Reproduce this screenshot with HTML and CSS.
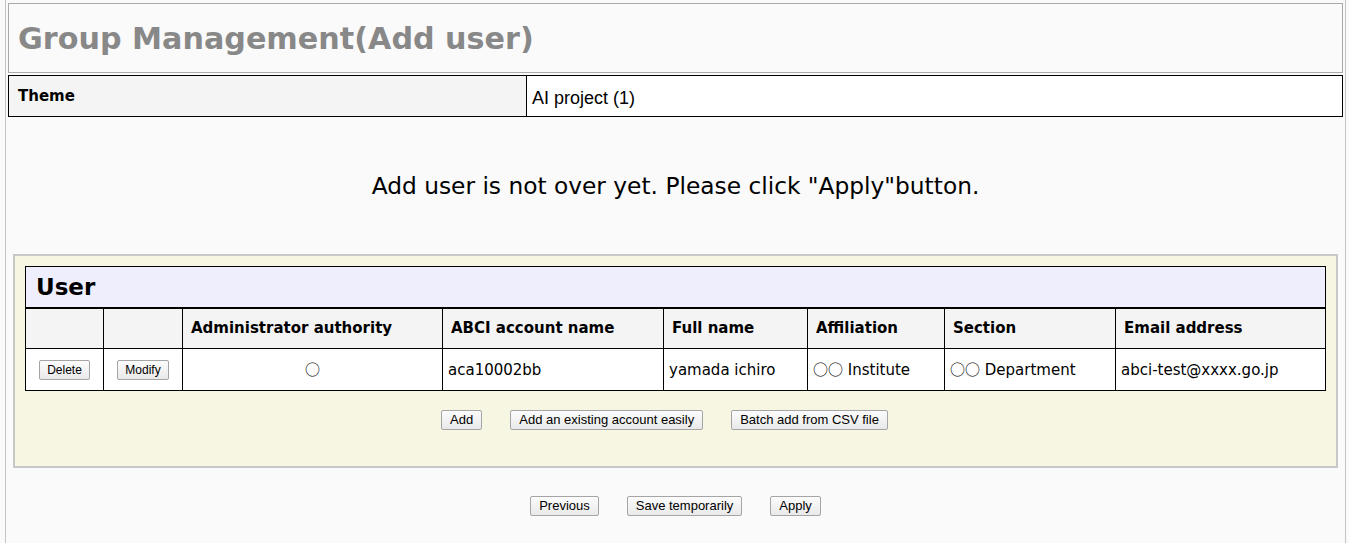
FILE: index.html
```html
<!DOCTYPE html>
<html>
<head>
<meta charset="utf-8">
<link rel="stylesheet" href="styles.css">
</head>
<body>
<div class="page">
  <div class="title-box"><h1 class="title">Group Management(Add user)</h1></div>
  <table class="theme">
    <tr><th class="theme-label">Theme</th><td class="theme-value">AI project (1)</td></tr>
  </table>
  <p class="message">Add user is not over yet. Please click "Apply"button.</p>
  <div class="panel">
    <table class="users">
      <tr><th class="caption" colspan="8">User</th></tr>
      <tr class="head">
        <th class="c1"></th><th class="c2"></th>
        <th class="c3">Administrator authority</th>
        <th class="c4">ABCI account name</th>
        <th class="c5">Full name</th>
        <th class="c6">Affiliation</th>
        <th class="c7">Section</th>
        <th class="c8">Email address</th>
      </tr>
      <tr class="row">
        <td class="btn-cell"><button class="btn">Delete</button></td>
        <td class="btn-cell"><button class="btn">Modify</button></td>
        <td class="center"><span class="mark">○</span></td>
        <td>aca10002bb</td>
        <td>yamada ichiro</td>
        <td><span class="mark">○○</span> Institute</td>
        <td><span class="mark">○○</span> Department</td>
        <td>abci-test@xxxx.go.jp</td>
      </tr>
    </table>
    <div class="actions">
      <button class="btn">Add</button>
      <button class="btn">Add an existing account easily</button>
      <button class="btn">Batch add from CSV file</button>
    </div>
  </div>
  <div class="footer">
    <button class="btn">Previous</button>
    <button class="btn">Save temporarily</button>
    <button class="btn">Apply</button>
  </div>
</div>
</body>
</html>
```
FILE: styles.css
```css
html, body {
  margin: 0;
  padding: 0;
  background: #fafafa;
}
body {
  font-family: "DejaVu Sans", Verdana, sans-serif;
  color: #000;
}
.page {
  margin: 0 3px 0 5px;
  border-left: 1px solid #c4c4c4;
  border-right: 1px solid #c4c4c4;
  padding: 3px 2px 0 2px;
  height: 543px;
  box-sizing: border-box;
}
.title-box {
  border: 1px solid #aaaaaa;
  height: 70px;
  box-sizing: border-box;
  display: flex;
  align-items: center;
  padding-left: 9px;
}
.title {
  margin: 0;
  font-size: 30.2px;
  font-weight: bold;
  color: #888888;
}
.theme {
  width: 100%;
  border-collapse: collapse;
  margin-top: 2px;
}
.theme th, .theme td {
  border: 1px solid #000;
  height: 41px;
  box-sizing: border-box;
  padding: 0 9px;
}
.theme-label {
  width: 518px;
  background: #f4f4f4;
  text-align: left;
  font-size: 15px;
  font-weight: bold;
  vertical-align: top;
  padding-top: 11px !important;
}
.theme-value {
  background: #fff;
  font-family: "Liberation Sans", sans-serif;
  font-size: 18px;
  padding-left: 5px !important;
  padding-top: 4px !important;
}
.message {
  margin: 0;
  height: 137px;
  box-sizing: border-box;
  padding-top: 55px;
  text-align: center;
  font-size: 23.3px;
}
.panel {
  margin: 0 5px;
  border: 2px solid #c8c8c8;
  background: #f7f6e3;
  padding: 10px 10px 0 10px;
  height: 214px;
  box-sizing: border-box;
}
.users {
  width: 100%;
  border-collapse: collapse;
  background: #fff;
}
.users th, .users td {
  border: 1px solid #000;
  font-size: 15px;
  text-align: left;
  padding: 0 5px;
  box-sizing: border-box;
}
.users .caption {
  background: #eeeefc;
  font-size: 23px;
  font-weight: bold;
  height: 41px;
  padding-left: 10px;
  border-bottom: 2px solid #000;
}
.head th {
  background: #f4f4f4;
  height: 41px;
  font-weight: bold;
  padding-left: 8px;
}
.row td {
  height: 42px;
}
.mark {
  font-family: "Noto Sans CJK JP", sans-serif;
  font-size: 15px;
  font-weight: 400;
  line-height: 1;
}
.c1 { width: 78px; }
.c2 { width: 79px; }
.c3 { width: 260px; }
.c4 { width: 221px; }
.c5 { width: 144px; }
.c6 { width: 137px; }
.c7 { width: 171px; }
.center { text-align: center !important; }
.btn-cell { text-align: center !important; }
.btn {
  font-family: "Liberation Sans", Arial, sans-serif;
  font-size: 13px;
  color: #000;
  height: 20px;
  padding: 0 8px;
  border: 1px solid #a5a5a5;
  border-radius: 2px;
  background: linear-gradient(#fcfcfc, #e9e9e9);
  line-height: 18px;
}
.btn-cell .btn {
  font-size: 12px;
  padding: 0 7px;
}
.actions {
  display: flex;
  justify-content: center;
  gap: 28px;
  margin-top: 19px;
  padding-right: 22px;
}
.footer {
  display: flex;
  justify-content: center;
  gap: 28px;
  margin-top: 28px;
}
```
